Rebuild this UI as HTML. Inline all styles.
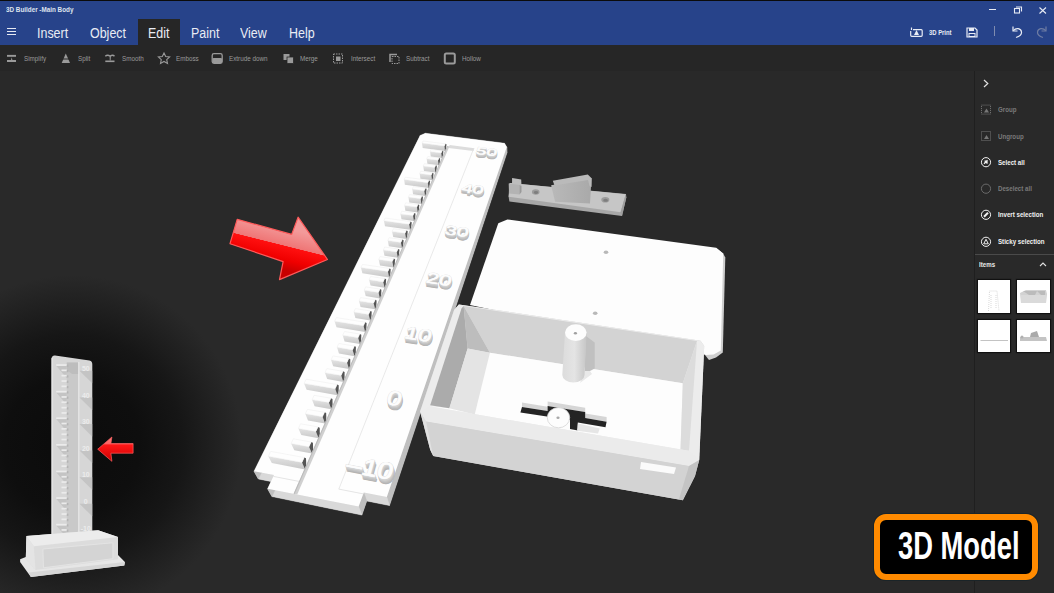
<!DOCTYPE html><html><head><meta charset="utf-8"><style>
html,body{margin:0;padding:0;}
body{width:1054px;height:593px;position:relative;overflow:hidden;background:#292929;}
</style></head><body>
<svg style="position:absolute;left:0;top:0" width="1054" height="593" viewBox="0 0 1054 593">
<defs>
<linearGradient id="tickfront" x1="0" y1="0" x2="0" y2="1"><stop offset="0" stop-color="#e4e4e4"/><stop offset="1" stop-color="#c8c8c8"/></linearGradient>
<linearGradient id="wedge" x1="0" y1="0" x2="1" y2="0"><stop offset="0" stop-color="#b9b9b9"/><stop offset="1" stop-color="#a9a9a9"/></linearGradient>
<linearGradient id="post" x1="0" y1="0" x2="1" y2="0"><stop offset="0" stop-color="#dcdcdc"/><stop offset="0.5" stop-color="#e4e4e4"/><stop offset="1" stop-color="#c6c6c6"/></linearGradient>
<linearGradient id="arrowg" gradientUnits="userSpaceOnUse" x1="262" y1="222" x2="252" y2="262">
<stop offset="0" stop-color="#f39a9a"/><stop offset="0.42" stop-color="#ef7676"/><stop offset="0.43" stop-color="#ff1010"/><stop offset="0.75" stop-color="#f00000"/><stop offset="1" stop-color="#c80000"/></linearGradient>
<linearGradient id="arrows" gradientUnits="userSpaceOnUse" x1="0" y1="437" x2="0" y2="461">
<stop offset="0" stop-color="#ff8080"/><stop offset="0.3" stop-color="#ff6060"/><stop offset="0.32" stop-color="#ff1818"/><stop offset="1" stop-color="#d00000"/></linearGradient>
<radialGradient id="vign" gradientUnits="userSpaceOnUse" cx="72" cy="445" r="170">
<stop offset="0" stop-color="#0b0b0b"/><stop offset="0.4" stop-color="#0e0e0e"/><stop offset="0.65" stop-color="#161616"/><stop offset="0.85" stop-color="#212121"/><stop offset="1" stop-color="#292929"/></radialGradient>
</defs>
<rect x="0" y="240" width="280" height="353" fill="url(#vign)"/>
<path d="M51.5,536.5 L51.5,359 Q51.6,355.3 55,355.5 L89.5,360.4 Q92.4,361 92.3,364.5 L92.3,536 Z" fill="#d6d6d6"/>
<rect x="51.5" y="358" width="1.6" height="178" fill="#e2e2e2"/>
<polygon points="66.8,362.4 78.2,362.4 78.2,536.0 66.8,536.0" fill="#c9c9c9" />
<polygon points="66.8,362.4 78.2,362.4 78.2,374.0 72.0,374.0 66.8,370.0" fill="#bdbdbd" />
<line x1="78.8" y1="362" x2="78.8" y2="536" stroke="#ededed" stroke-width="0.9"/>
<polygon points="56.2,365.8 66.8,365.8 66.8,378.2" fill="#c4c4c4" />
<rect x="56.2" y="364.2" width="10.6" height="1.7" fill="#ebebeb"/>
<rect x="66.8" y="364.7" width="1.6" height="2.2" fill="#b4b4b4"/>
<rect x="61.5" y="369.5" width="5.3" height="1.7" fill="#ebebeb"/>
<rect x="66.8" y="370.0" width="1.6" height="2.2" fill="#b4b4b4"/>
<rect x="61.5" y="374.8" width="5.3" height="1.7" fill="#ebebeb"/>
<rect x="66.8" y="375.3" width="1.6" height="2.2" fill="#b4b4b4"/>
<rect x="61.5" y="380.2" width="5.3" height="1.7" fill="#ebebeb"/>
<rect x="66.8" y="380.7" width="1.6" height="2.2" fill="#b4b4b4"/>
<rect x="61.5" y="385.5" width="5.3" height="1.7" fill="#ebebeb"/>
<rect x="66.8" y="386.0" width="1.6" height="2.2" fill="#b4b4b4"/>
<polygon points="56.2,392.4 66.8,392.4 66.8,404.8" fill="#c4c4c4" />
<rect x="56.2" y="390.8" width="10.6" height="1.7" fill="#ebebeb"/>
<rect x="66.8" y="391.3" width="1.6" height="2.2" fill="#b4b4b4"/>
<rect x="61.5" y="396.1" width="5.3" height="1.7" fill="#ebebeb"/>
<rect x="66.8" y="396.6" width="1.6" height="2.2" fill="#b4b4b4"/>
<rect x="61.5" y="401.4" width="5.3" height="1.7" fill="#ebebeb"/>
<rect x="66.8" y="401.9" width="1.6" height="2.2" fill="#b4b4b4"/>
<rect x="61.5" y="406.8" width="5.3" height="1.7" fill="#ebebeb"/>
<rect x="66.8" y="407.3" width="1.6" height="2.2" fill="#b4b4b4"/>
<rect x="61.5" y="412.1" width="5.3" height="1.7" fill="#ebebeb"/>
<rect x="66.8" y="412.6" width="1.6" height="2.2" fill="#b4b4b4"/>
<polygon points="56.2,419.0 66.8,419.0 66.8,431.4" fill="#c4c4c4" />
<rect x="56.2" y="417.4" width="10.6" height="1.7" fill="#ebebeb"/>
<rect x="66.8" y="417.9" width="1.6" height="2.2" fill="#b4b4b4"/>
<rect x="61.5" y="422.7" width="5.3" height="1.7" fill="#ebebeb"/>
<rect x="66.8" y="423.2" width="1.6" height="2.2" fill="#b4b4b4"/>
<rect x="61.5" y="428.0" width="5.3" height="1.7" fill="#ebebeb"/>
<rect x="66.8" y="428.5" width="1.6" height="2.2" fill="#b4b4b4"/>
<rect x="61.5" y="433.4" width="5.3" height="1.7" fill="#ebebeb"/>
<rect x="66.8" y="433.9" width="1.6" height="2.2" fill="#b4b4b4"/>
<rect x="61.5" y="438.7" width="5.3" height="1.7" fill="#ebebeb"/>
<rect x="66.8" y="439.2" width="1.6" height="2.2" fill="#b4b4b4"/>
<polygon points="56.2,445.6 66.8,445.6 66.8,458.0" fill="#c4c4c4" />
<rect x="56.2" y="444.0" width="10.6" height="1.7" fill="#ebebeb"/>
<rect x="66.8" y="444.5" width="1.6" height="2.2" fill="#b4b4b4"/>
<rect x="61.5" y="449.3" width="5.3" height="1.7" fill="#ebebeb"/>
<rect x="66.8" y="449.8" width="1.6" height="2.2" fill="#b4b4b4"/>
<rect x="61.5" y="454.6" width="5.3" height="1.7" fill="#ebebeb"/>
<rect x="66.8" y="455.1" width="1.6" height="2.2" fill="#b4b4b4"/>
<rect x="61.5" y="460.0" width="5.3" height="1.7" fill="#ebebeb"/>
<rect x="66.8" y="460.5" width="1.6" height="2.2" fill="#b4b4b4"/>
<rect x="61.5" y="465.3" width="5.3" height="1.7" fill="#ebebeb"/>
<rect x="66.8" y="465.8" width="1.6" height="2.2" fill="#b4b4b4"/>
<polygon points="56.2,472.2 66.8,472.2 66.8,484.6" fill="#c4c4c4" />
<rect x="56.2" y="470.6" width="10.6" height="1.7" fill="#ebebeb"/>
<rect x="66.8" y="471.1" width="1.6" height="2.2" fill="#b4b4b4"/>
<rect x="61.5" y="475.9" width="5.3" height="1.7" fill="#ebebeb"/>
<rect x="66.8" y="476.4" width="1.6" height="2.2" fill="#b4b4b4"/>
<rect x="61.5" y="481.2" width="5.3" height="1.7" fill="#ebebeb"/>
<rect x="66.8" y="481.7" width="1.6" height="2.2" fill="#b4b4b4"/>
<rect x="61.5" y="486.6" width="5.3" height="1.7" fill="#ebebeb"/>
<rect x="66.8" y="487.1" width="1.6" height="2.2" fill="#b4b4b4"/>
<rect x="61.5" y="491.9" width="5.3" height="1.7" fill="#ebebeb"/>
<rect x="66.8" y="492.4" width="1.6" height="2.2" fill="#b4b4b4"/>
<polygon points="56.2,498.8 66.8,498.8 66.8,511.2" fill="#c4c4c4" />
<rect x="56.2" y="497.2" width="10.6" height="1.7" fill="#ebebeb"/>
<rect x="66.8" y="497.7" width="1.6" height="2.2" fill="#b4b4b4"/>
<rect x="61.5" y="502.5" width="5.3" height="1.7" fill="#ebebeb"/>
<rect x="66.8" y="503.0" width="1.6" height="2.2" fill="#b4b4b4"/>
<rect x="61.5" y="507.8" width="5.3" height="1.7" fill="#ebebeb"/>
<rect x="66.8" y="508.3" width="1.6" height="2.2" fill="#b4b4b4"/>
<rect x="61.5" y="513.2" width="5.3" height="1.7" fill="#ebebeb"/>
<rect x="66.8" y="513.7" width="1.6" height="2.2" fill="#b4b4b4"/>
<rect x="61.5" y="518.5" width="5.3" height="1.7" fill="#ebebeb"/>
<rect x="66.8" y="519.0" width="1.6" height="2.2" fill="#b4b4b4"/>
<polygon points="56.2,525.4 66.8,525.4 66.8,537.8" fill="#c4c4c4" />
<rect x="56.2" y="523.8" width="10.6" height="1.7" fill="#ebebeb"/>
<rect x="66.8" y="524.3" width="1.6" height="2.2" fill="#b4b4b4"/>
<rect x="61.5" y="529.1" width="5.3" height="1.7" fill="#ebebeb"/>
<rect x="66.8" y="529.6" width="1.6" height="2.2" fill="#b4b4b4"/>
<rect x="61.5" y="534.4" width="5.3" height="1.7" fill="#ebebeb"/>
<rect x="66.8" y="534.9" width="1.6" height="2.2" fill="#b4b4b4"/>
<polygon points="79.5,370.8 92.2,370.8 92.2,383.3" fill="#c4c4c4" />
<text x="85.8" y="370.9" text-anchor="middle" font-family="Liberation Sans" font-weight="bold" font-size="7" fill="#ececec">50</text>
<polygon points="79.5,397.4 92.2,397.4 92.2,409.9" fill="#c4c4c4" />
<text x="85.8" y="397.5" text-anchor="middle" font-family="Liberation Sans" font-weight="bold" font-size="7" fill="#ececec">40</text>
<polygon points="79.5,424.0 92.2,424.0 92.2,436.5" fill="#c4c4c4" />
<text x="85.8" y="424.1" text-anchor="middle" font-family="Liberation Sans" font-weight="bold" font-size="7" fill="#ececec">30</text>
<polygon points="79.5,450.6 92.2,450.6 92.2,463.1" fill="#c4c4c4" />
<text x="85.8" y="450.7" text-anchor="middle" font-family="Liberation Sans" font-weight="bold" font-size="7" fill="#ececec">20</text>
<polygon points="79.5,477.2 92.2,477.2 92.2,489.7" fill="#c4c4c4" />
<text x="85.8" y="477.3" text-anchor="middle" font-family="Liberation Sans" font-weight="bold" font-size="7" fill="#ececec">10</text>
<polygon points="79.5,503.8 92.2,503.8 92.2,516.3" fill="#c4c4c4" />
<text x="85.8" y="503.9" text-anchor="middle" font-family="Liberation Sans" font-weight="bold" font-size="7" fill="#ececec">0</text>
<polygon points="79.5,530.4 92.2,530.4 92.2,542.9" fill="#c4c4c4" />
<text x="85.8" y="530.5" text-anchor="middle" font-family="Liberation Sans" font-weight="bold" font-size="7" fill="#ececec">-10</text>
<polygon points="20.1,559.3 25.8,557.0 118.0,555.0 124.9,562.1 124.3,565.5 30.9,577.0 20.1,562.0" fill="#e6e6e6" />
<polygon points="28.7,572.4 124.9,562.1 124.3,565.5 30.9,577.0" fill="#d6d6d6" />
<polygon points="26.4,536.0 98.1,530.2 118.0,537.1 118.0,559.3 35.5,570.1 25.8,558.7" fill="#dcdcdc" />
<polygon points="26.4,536.0 98.1,530.2 118.0,537.1 33.8,546.2" fill="#ececec" />
<polygon points="26.4,536.0 33.8,546.2 35.5,570.1 25.8,558.7" fill="#e4e4e4" />
<polygon points="42.9,549.0 112.9,542.8 112.9,558.7 43.5,567.8" fill="#d4d4d4" stroke="#e6e6e6" stroke-width="0.8"/>
<polygon points="716.1,247.7 723.2,253.6 725.3,257.5 722.8,352.5 716.0,357.5 709.0,360.0 705.0,355.0" fill="#cfcfcf" />
<polygon points="498.3,223.2 507.4,219.4 716.1,247.7 723.2,253.6 720.8,350.4 713.7,354.5 706.0,355.0 470.0,305.0" fill="#fdfdfd" />
<ellipse cx="606" cy="252.3" rx="2.3" ry="1.7" fill="#b8b8b8"/>
<ellipse cx="595.2" cy="313.3" rx="2.3" ry="1.7" fill="#b8b8b8"/>
<polygon points="509.4,183.0 626.0,194.0 626.3,197.5 622.0,216.0 509.4,201.6 508.6,196.5" fill="#a7a7a7" />
<polygon points="510.0,183.0 625.7,194.2 620.6,212.3 508.7,196.7" fill="#c6c6c6" />
<polygon points="625.7,194.2 626.3,197.5 622.0,216.0 620.6,212.3" fill="#9e9e9e" />
<polygon points="512.1,178.1 521.2,179.5 521.5,186.0 512.0,185.0" fill="#bdbdbd" />
<polygon points="508.7,183.5 519.5,185.0 519.5,194.5 509.0,193.5" fill="#b3b3b3" />
<polygon points="519.5,185.0 521.5,186.0 521.5,192.0 519.5,194.5" fill="#9a9a9a" />
<polygon points="551.1,185.2 591.6,178.0 590.0,203.5 555.1,201.8" fill="url(#wedge)" />
<polygon points="552.8,180.8 587.8,174.6 591.6,178.3 591.6,187.0 589.5,186.0 588.0,180.0 554.5,185.5" fill="#bababa" />
<ellipse cx="535.7" cy="192" rx="3.8" ry="2.7" fill="#9c9c9c"/>
<ellipse cx="536.0" cy="192.5" rx="2.28" ry="1.4850000000000003" fill="#7e7e7e"/>
<ellipse cx="605.3" cy="199.8" rx="4" ry="2.8" fill="#9c9c9c"/>
<ellipse cx="605.5999999999999" cy="200.3" rx="2.4" ry="1.54" fill="#7e7e7e"/>
<polygon points="420.9,141.1 426.0,138.8 504.7,149.0 507.0,152.8 389.5,505.6 366.8,501.0 361.9,515.1 272.0,496.6 278.2,483.0 258.4,479.0" fill="#cfcfcf" />
<polygon points="420.1,135.4 425.3,133.2 426.0,138.8 420.9,141.1" fill="#bfbfbf" stroke="#bfbfbf" stroke-width="0.4"/>
<polygon points="425.3,133.2 504.5,143.2 504.7,149.0 426.0,138.8" fill="#d9d9d9" stroke="#d9d9d9" stroke-width="0.4"/>
<polygon points="504.5,143.2 506.8,147.0 507.0,152.8 504.7,149.0" fill="#bfbfbf" stroke="#bfbfbf" stroke-width="0.4"/>
<polygon points="506.8,147.0 386.8,496.9 389.5,505.6 507.0,152.8" fill="#bfbfbf" stroke="#bfbfbf" stroke-width="0.4"/>
<polygon points="386.8,496.9 363.8,492.5 366.8,501.0 389.5,505.6" fill="#d9d9d9" stroke="#d9d9d9" stroke-width="0.4"/>
<polygon points="363.8,492.5 358.6,506.5 361.9,515.1 366.8,501.0" fill="#bfbfbf" stroke="#bfbfbf" stroke-width="0.4"/>
<polygon points="358.6,506.5 267.6,488.7 272.0,496.6 361.9,515.1" fill="#d9d9d9" stroke="#d9d9d9" stroke-width="0.4"/>
<polygon points="267.6,488.7 274.0,475.1 278.2,483.0 272.0,496.6" fill="#bfbfbf" stroke="#bfbfbf" stroke-width="0.4"/>
<polygon points="274.0,475.1 254.0,471.2 258.4,479.0 278.2,483.0" fill="#d9d9d9" stroke="#d9d9d9" stroke-width="0.4"/>
<polygon points="254.0,471.2 420.1,135.4 420.9,141.1 258.4,479.0" fill="#bfbfbf" stroke="#bfbfbf" stroke-width="0.4"/>
<polygon points="420.1,135.4 425.3,133.2 504.5,143.2 506.8,147.0 386.8,496.9 363.8,492.5 358.6,506.5 267.6,488.7 274.0,475.1 254.0,471.2" fill="#fefefe" />
<polygon points="449.7,145.0 474.5,148.2 473.4,151.1 448.4,147.9" fill="#dcdcdc" />
<polyline points="473.4,149.3 338.8,489.1" fill="none" stroke="#e3e3e3" stroke-width="0.8"/>
<polyline points="273.4,476.4 300.5,481.7" fill="none" stroke="#dedede" stroke-width="0.8"/>
<polyline points="338.8,489.1 363.3,493.9" fill="none" stroke="#dedede" stroke-width="0.8"/>
<polygon points="422.0,143.1 444.4,145.9 444.9,150.9 422.7,148.0" fill="url(#tickfront)" />
<polygon points="445.3,143.8 446.5,144.3 445.8,151.0 444.9,150.9 444.4,145.9" fill="#555555" />
<polygon points="423.0,141.0 445.3,143.8 444.4,145.9 422.0,143.1" fill="#fefefe" stroke="#e8e8e8" stroke-width="0.4"/>
<polygon points="430.1,151.6 441.2,153.0 441.8,158.0 430.8,156.5" fill="url(#tickfront)" />
<polygon points="442.2,150.8 443.4,151.3 442.7,158.1 441.8,158.0 441.2,153.0" fill="#555555" />
<polygon points="431.1,149.4 442.2,150.8 441.2,153.0 430.1,151.6" fill="#fefefe" stroke="#e8e8e8" stroke-width="0.4"/>
<polygon points="426.7,158.7 438.0,160.2 438.6,165.2 427.4,163.7" fill="url(#tickfront)" />
<polygon points="439.0,157.9 440.2,158.5 439.5,165.4 438.6,165.2 438.0,160.2" fill="#555555" />
<polygon points="427.8,156.5 439.0,157.9 438.0,160.2 426.7,158.7" fill="#fefefe" stroke="#e8e8e8" stroke-width="0.4"/>
<polygon points="423.2,166.0 434.7,167.5 435.3,172.6 424.0,171.1" fill="url(#tickfront)" />
<polygon points="435.7,165.2 436.9,165.8 436.2,172.8 435.3,172.6 434.7,167.5" fill="#555555" />
<polygon points="424.3,163.7 435.7,165.2 434.7,167.5 423.2,166.0" fill="#fefefe" stroke="#e8e8e8" stroke-width="0.4"/>
<polygon points="419.7,173.5 431.3,175.1 432.0,180.2 420.4,178.7" fill="url(#tickfront)" />
<polygon points="432.3,172.7 433.5,173.3 432.9,180.4 432.0,180.2 431.3,175.1" fill="#555555" />
<polygon points="420.8,171.2 432.3,172.7 431.3,175.1 419.7,173.5" fill="#fefefe" stroke="#e8e8e8" stroke-width="0.4"/>
<polygon points="404.1,179.6 427.8,182.8 428.5,188.0 404.9,184.8" fill="url(#tickfront)" />
<polygon points="428.9,180.3 430.1,180.9 429.4,188.1 428.5,188.0 427.8,182.8" fill="#555555" />
<polygon points="405.3,177.2 428.9,180.3 427.8,182.8 404.1,179.6" fill="#fefefe" stroke="#e8e8e8" stroke-width="0.4"/>
<polygon points="412.3,189.1 424.2,190.7 425.0,196.0 413.1,194.3" fill="url(#tickfront)" />
<polygon points="425.4,188.2 426.6,188.8 425.9,196.1 425.0,196.0 424.2,190.7" fill="#555555" />
<polygon points="413.4,186.6 425.4,188.2 424.2,190.7 412.3,189.1" fill="#fefefe" stroke="#e8e8e8" stroke-width="0.4"/>
<polygon points="408.4,197.1 420.6,198.8 421.4,204.1 409.3,202.4" fill="url(#tickfront)" />
<polygon points="421.7,196.2 423.0,196.8 422.3,204.3 421.4,204.1 420.6,198.8" fill="#555555" />
<polygon points="409.6,194.6 421.7,196.2 420.6,198.8 408.4,197.1" fill="#fefefe" stroke="#e8e8e8" stroke-width="0.4"/>
<polygon points="404.5,205.4 416.9,207.1 417.7,212.5 405.4,210.8" fill="url(#tickfront)" />
<polygon points="418.0,204.5 419.3,205.1 418.7,212.6 417.7,212.5 416.9,207.1" fill="#555555" />
<polygon points="405.7,202.8 418.0,204.5 416.9,207.1 404.5,205.4" fill="#fefefe" stroke="#e8e8e8" stroke-width="0.4"/>
<polygon points="400.5,213.9 413.0,215.6 413.9,221.1 401.5,219.3" fill="url(#tickfront)" />
<polygon points="414.2,212.9 415.5,213.5 414.9,221.2 413.9,221.1 413.0,215.6" fill="#555555" />
<polygon points="401.7,211.2 414.2,212.9 413.0,215.6 400.5,213.9" fill="#fefefe" stroke="#e8e8e8" stroke-width="0.4"/>
<polygon points="383.9,220.8 409.1,224.3 410.1,229.8 385.0,226.2" fill="url(#tickfront)" />
<polygon points="410.4,221.6 411.7,222.2 411.0,230.0 410.1,229.8 409.1,224.3" fill="#555555" />
<polygon points="385.2,218.0 410.4,221.6 409.1,224.3 383.9,220.8" fill="#fefefe" stroke="#e8e8e8" stroke-width="0.4"/>
<polygon points="392.1,231.4 405.1,233.3 406.1,238.9 393.2,237.0" fill="url(#tickfront)" />
<polygon points="406.3,230.5 407.7,231.1 407.1,239.0 406.1,238.9 405.1,233.3" fill="#555555" />
<polygon points="393.4,228.7 406.3,230.5 405.1,233.3 392.1,231.4" fill="#fefefe" stroke="#e8e8e8" stroke-width="0.4"/>
<polygon points="387.8,240.6 400.9,242.5 402.0,248.2 388.9,246.2" fill="url(#tickfront)" />
<polygon points="402.2,239.6 403.6,240.2 403.0,248.3 402.0,248.2 400.9,242.5" fill="#555555" />
<polygon points="389.1,237.7 402.2,239.6 400.9,242.5 387.8,240.6" fill="#fefefe" stroke="#e8e8e8" stroke-width="0.4"/>
<polygon points="383.3,250.0 396.7,251.9 397.8,257.7 384.5,255.7" fill="url(#tickfront)" />
<polygon points="398.0,249.0 399.4,249.6 398.8,257.8 397.8,257.7 396.7,251.9" fill="#555555" />
<polygon points="384.7,247.0 398.0,249.0 396.7,251.9 383.3,250.0" fill="#fefefe" stroke="#e8e8e8" stroke-width="0.4"/>
<polygon points="378.7,259.6 392.3,261.6 393.5,267.4 380.0,265.4" fill="url(#tickfront)" />
<polygon points="393.7,258.6 395.1,259.2 394.5,267.6 393.5,267.4 392.3,261.6" fill="#555555" />
<polygon points="380.1,256.6 393.7,258.6 392.3,261.6 378.7,259.6" fill="#fefefe" stroke="#e8e8e8" stroke-width="0.4"/>
<polygon points="360.9,267.5 387.9,271.6 389.1,277.4 362.4,273.3" fill="url(#tickfront)" />
<polygon points="389.3,268.4 390.7,269.1 390.1,277.6 389.1,277.4 387.9,271.6" fill="#555555" />
<polygon points="362.5,264.4 389.3,268.4 387.9,271.6 360.9,267.5" fill="#fefefe" stroke="#e8e8e8" stroke-width="0.4"/>
<polygon points="369.1,279.7 383.2,281.9 384.6,287.8 370.6,285.6" fill="url(#tickfront)" />
<polygon points="384.7,278.6 386.1,279.3 385.6,287.9 384.6,287.8 383.2,281.9" fill="#555555" />
<polygon points="370.6,276.5 384.7,278.6 383.2,281.9 369.1,279.7" fill="#fefefe" stroke="#e8e8e8" stroke-width="0.4"/>
<polygon points="364.2,290.2 378.5,292.4 379.9,298.4 365.7,296.1" fill="url(#tickfront)" />
<polygon points="380.0,289.1 381.4,289.7 381.0,298.6 379.9,298.4 378.5,292.4" fill="#555555" />
<polygon points="365.7,286.9 380.0,289.1 378.5,292.4 364.2,290.2" fill="#fefefe" stroke="#e8e8e8" stroke-width="0.4"/>
<polygon points="359.0,301.0 373.6,303.2 375.1,309.3 360.6,307.0" fill="url(#tickfront)" />
<polygon points="375.2,299.8 376.6,300.5 376.2,309.5 375.1,309.3 373.6,303.2" fill="#555555" />
<polygon points="360.6,297.6 375.2,299.8 373.6,303.2 359.0,301.0" fill="#fefefe" stroke="#e8e8e8" stroke-width="0.4"/>
<polygon points="353.8,312.0 368.6,314.4 370.2,320.5 355.4,318.1" fill="url(#tickfront)" />
<polygon points="370.2,310.9 371.7,311.5 371.3,320.7 370.2,320.5 368.6,314.4" fill="#555555" />
<polygon points="355.4,308.6 370.2,310.9 368.6,314.4 353.8,312.0" fill="#fefefe" stroke="#e8e8e8" stroke-width="0.4"/>
<polygon points="334.6,321.2 363.5,325.8 365.1,332.0 336.5,327.3" fill="url(#tickfront)" />
<polygon points="365.1,322.2 366.6,322.9 366.2,332.2 365.1,332.0 363.5,325.8" fill="#555555" />
<polygon points="336.4,317.6 365.1,322.2 363.5,325.8 334.6,321.2" fill="#fefefe" stroke="#e8e8e8" stroke-width="0.4"/>
<polygon points="342.7,335.2 358.1,337.7 359.9,344.0 344.6,341.4" fill="url(#tickfront)" />
<polygon points="359.8,334.0 361.3,334.7 361.0,344.2 359.9,344.0 358.1,337.7" fill="#555555" />
<polygon points="344.5,331.5 359.8,334.0 358.1,337.7 342.7,335.2" fill="#fefefe" stroke="#e8e8e8" stroke-width="0.4"/>
<polygon points="337.0,347.3 352.6,349.9 354.5,356.2 339.0,353.6" fill="url(#tickfront)" />
<polygon points="354.4,346.0 355.9,346.7 355.7,356.4 354.5,356.2 352.6,349.9" fill="#555555" />
<polygon points="338.8,343.5 354.4,346.0 352.6,349.9 337.0,347.3" fill="#fefefe" stroke="#e8e8e8" stroke-width="0.4"/>
<polygon points="331.0,359.8 347.0,362.4 349.0,368.9 333.2,366.2" fill="url(#tickfront)" />
<polygon points="348.8,358.5 350.3,359.2 350.2,369.1 349.0,368.9 347.0,362.4" fill="#555555" />
<polygon points="332.9,355.9 348.8,358.5 347.0,362.4 331.0,359.8" fill="#fefefe" stroke="#e8e8e8" stroke-width="0.4"/>
<polygon points="324.9,372.7 341.2,375.4 343.3,381.9 327.2,379.1" fill="url(#tickfront)" />
<polygon points="343.0,371.3 344.6,372.0 344.5,382.1 343.3,381.9 341.2,375.4" fill="#555555" />
<polygon points="326.8,368.6 343.0,371.3 341.2,375.4 324.9,372.7" fill="#fefefe" stroke="#e8e8e8" stroke-width="0.4"/>
<polygon points="304.1,383.4 335.2,388.7 337.4,395.3 306.6,389.8" fill="url(#tickfront)" />
<polygon points="337.1,384.5 338.7,385.2 338.6,395.5 337.4,395.3 335.2,388.7" fill="#555555" />
<polygon points="306.1,379.2 337.1,384.5 335.2,388.7 304.1,383.4" fill="#fefefe" stroke="#e8e8e8" stroke-width="0.4"/>
<polygon points="312.1,399.7 328.9,402.6 331.3,409.2 314.6,406.2" fill="url(#tickfront)" />
<polygon points="330.9,398.2 332.5,399.0 332.6,409.4 331.3,409.2 328.9,402.6" fill="#555555" />
<polygon points="314.1,395.3 330.9,398.2 328.9,402.6 312.1,399.7" fill="#fefefe" stroke="#e8e8e8" stroke-width="0.4"/>
<polygon points="305.3,413.8 322.5,416.8 325.1,423.5 308.0,420.4" fill="url(#tickfront)" />
<polygon points="324.6,412.3 326.2,413.1 326.3,423.7 325.1,423.5 322.5,416.8" fill="#555555" />
<polygon points="307.4,409.4 324.6,412.3 322.5,416.8 305.3,413.8" fill="#fefefe" stroke="#e8e8e8" stroke-width="0.4"/>
<polygon points="298.4,428.5 315.9,431.6 318.6,438.3 301.3,435.1" fill="url(#tickfront)" />
<polygon points="318.0,426.9 319.7,427.7 319.9,438.5 318.6,438.3 315.9,431.6" fill="#555555" />
<polygon points="300.5,423.8 318.0,426.9 315.9,431.6 298.4,428.5" fill="#fefefe" stroke="#e8e8e8" stroke-width="0.4"/>
<polygon points="291.1,443.6 309.0,446.8 312.0,453.6 294.3,450.3" fill="url(#tickfront)" />
<polygon points="311.2,442.0 312.9,442.8 313.3,453.8 312.0,453.6 309.0,446.8" fill="#555555" />
<polygon points="293.4,438.8 311.2,442.0 309.0,446.8 291.1,443.6" fill="#fefefe" stroke="#e8e8e8" stroke-width="0.4"/>
<polygon points="268.3,456.3 302.0,462.5 305.1,469.4 271.8,463.0" fill="url(#tickfront)" />
<polygon points="304.2,457.5 306.0,458.3 306.4,469.6 305.1,469.4 302.0,462.5" fill="#555555" />
<polygon points="270.7,451.4 304.2,457.5 302.0,462.5 268.3,456.3" fill="#fefefe" stroke="#e8e8e8" stroke-width="0.4"/>
<polygon points="447.2,145.9 449.5,146.2 297.2,494.5 293.6,493.8" fill="#d0d0d0" />
<polygon points="447.2,145.9 447.9,146.0 294.6,494.0 293.6,493.8" fill="#bababa" />
<text transform="matrix(0.8878,0.1140,-0.1327,0.4702,486.86,154.78)" x="0" y="7.5" text-anchor="middle" font-family="Liberation Sans" font-size="21" fill="#b4b4b4" stroke="#b4b4b4" stroke-width="1.1">50</text>
<text transform="matrix(0.8878,0.1140,-0.1327,0.4702,486.82,154.02)" x="0" y="7.5" text-anchor="middle" font-family="Liberation Sans" font-size="21" fill="#bdbdbd" stroke="#bdbdbd" stroke-width="1.1">50</text>
<text transform="matrix(0.8878,0.1140,-0.1327,0.4702,486.77,153.20)" x="0" y="7.5" text-anchor="middle" font-family="Liberation Sans" font-size="21" fill="#c6c6c6" stroke="#c6c6c6" stroke-width="1.1">50</text>
<text transform="matrix(0.8878,0.1140,-0.1327,0.4702,486.72,152.39)" x="0" y="7.5" text-anchor="middle" font-family="Liberation Sans" font-size="21" fill="#d2d2d2" stroke="#d2d2d2" stroke-width="1.1">50</text>
<text transform="matrix(0.8878,0.1140,-0.1327,0.4702,486.67,151.57)" x="0" y="7.5" text-anchor="middle" font-family="Liberation Sans" font-size="21" fill="#fdfdfd" stroke="#dcdcdc" stroke-width="1.1" paint-order="stroke">50</text>
<text transform="matrix(0.8878,0.1140,-0.1327,0.4702,486.67,151.57)" x="0" y="7.5" text-anchor="middle" font-family="Liberation Sans" font-size="21" fill="#fdfdfd" stroke="#fdfdfd" stroke-width="0.4">50</text>
<text transform="matrix(0.9394,0.1272,-0.1493,0.5291,473.01,192.30)" x="0" y="7.5" text-anchor="middle" font-family="Liberation Sans" font-size="21" fill="#b4b4b4" stroke="#b4b4b4" stroke-width="1.1">40</text>
<text transform="matrix(0.9394,0.1272,-0.1493,0.5291,472.95,191.49)" x="0" y="7.5" text-anchor="middle" font-family="Liberation Sans" font-size="21" fill="#bdbdbd" stroke="#bdbdbd" stroke-width="1.1">40</text>
<text transform="matrix(0.9394,0.1272,-0.1493,0.5291,472.87,190.63)" x="0" y="7.5" text-anchor="middle" font-family="Liberation Sans" font-size="21" fill="#c6c6c6" stroke="#c6c6c6" stroke-width="1.1">40</text>
<text transform="matrix(0.9394,0.1272,-0.1493,0.5291,472.80,189.76)" x="0" y="7.5" text-anchor="middle" font-family="Liberation Sans" font-size="21" fill="#d2d2d2" stroke="#d2d2d2" stroke-width="1.1">40</text>
<text transform="matrix(0.9394,0.1272,-0.1493,0.5291,472.73,188.90)" x="0" y="7.5" text-anchor="middle" font-family="Liberation Sans" font-size="21" fill="#fdfdfd" stroke="#dcdcdc" stroke-width="1.1" paint-order="stroke">40</text>
<text transform="matrix(0.9394,0.1272,-0.1493,0.5291,472.73,188.90)" x="0" y="7.5" text-anchor="middle" font-family="Liberation Sans" font-size="21" fill="#fdfdfd" stroke="#fdfdfd" stroke-width="0.4">40</text>
<text transform="matrix(0.9973,0.1430,-0.1693,0.5997,457.39,234.66)" x="0" y="7.5" text-anchor="middle" font-family="Liberation Sans" font-size="21" fill="#b4b4b4" stroke="#b4b4b4" stroke-width="1.1">30</text>
<text transform="matrix(0.9973,0.1430,-0.1693,0.5997,457.29,233.81)" x="0" y="7.5" text-anchor="middle" font-family="Liberation Sans" font-size="21" fill="#bdbdbd" stroke="#bdbdbd" stroke-width="1.1">30</text>
<text transform="matrix(0.9973,0.1430,-0.1693,0.5997,457.20,232.89)" x="0" y="7.5" text-anchor="middle" font-family="Liberation Sans" font-size="21" fill="#c6c6c6" stroke="#c6c6c6" stroke-width="1.1">30</text>
<text transform="matrix(0.9973,0.1430,-0.1693,0.5997,457.10,231.98)" x="0" y="7.5" text-anchor="middle" font-family="Liberation Sans" font-size="21" fill="#d2d2d2" stroke="#d2d2d2" stroke-width="1.1">30</text>
<text transform="matrix(0.9973,0.1430,-0.1693,0.5997,457.00,231.06)" x="0" y="7.5" text-anchor="middle" font-family="Liberation Sans" font-size="21" fill="#fdfdfd" stroke="#dcdcdc" stroke-width="1.1" paint-order="stroke">30</text>
<text transform="matrix(0.9973,0.1430,-0.1693,0.5997,457.00,231.06)" x="0" y="7.5" text-anchor="middle" font-family="Liberation Sans" font-size="21" fill="#fdfdfd" stroke="#fdfdfd" stroke-width="0.4">30</text>
<text transform="matrix(1.0628,0.1621,-0.1935,0.6856,439.63,282.89)" x="0" y="7.5" text-anchor="middle" font-family="Liberation Sans" font-size="21" fill="#b4b4b4" stroke="#b4b4b4" stroke-width="1.1">20</text>
<text transform="matrix(1.0628,0.1621,-0.1935,0.6856,439.50,281.98)" x="0" y="7.5" text-anchor="middle" font-family="Liberation Sans" font-size="21" fill="#bdbdbd" stroke="#bdbdbd" stroke-width="1.1">20</text>
<text transform="matrix(1.0628,0.1621,-0.1935,0.6856,439.36,281.00)" x="0" y="7.5" text-anchor="middle" font-family="Liberation Sans" font-size="21" fill="#c6c6c6" stroke="#c6c6c6" stroke-width="1.1">20</text>
<text transform="matrix(1.0628,0.1621,-0.1935,0.6856,439.22,280.02)" x="0" y="7.5" text-anchor="middle" font-family="Liberation Sans" font-size="21" fill="#d2d2d2" stroke="#d2d2d2" stroke-width="1.1">20</text>
<text transform="matrix(1.0628,0.1621,-0.1935,0.6856,439.09,279.04)" x="0" y="7.5" text-anchor="middle" font-family="Liberation Sans" font-size="21" fill="#fdfdfd" stroke="#dcdcdc" stroke-width="1.1" paint-order="stroke">20</text>
<text transform="matrix(1.0628,0.1621,-0.1935,0.6856,439.09,279.04)" x="0" y="7.5" text-anchor="middle" font-family="Liberation Sans" font-size="21" fill="#fdfdfd" stroke="#fdfdfd" stroke-width="0.4">20</text>
<text transform="matrix(1.1375,0.1856,-0.2233,0.7912,419.27,338.26)" x="0" y="7.5" text-anchor="middle" font-family="Liberation Sans" font-size="21" fill="#b4b4b4" stroke="#b4b4b4" stroke-width="1.1">10</text>
<text transform="matrix(1.1375,0.1856,-0.2233,0.7912,419.09,337.29)" x="0" y="7.5" text-anchor="middle" font-family="Liberation Sans" font-size="21" fill="#bdbdbd" stroke="#bdbdbd" stroke-width="1.1">10</text>
<text transform="matrix(1.1375,0.1856,-0.2233,0.7912,418.90,336.25)" x="0" y="7.5" text-anchor="middle" font-family="Liberation Sans" font-size="21" fill="#c6c6c6" stroke="#c6c6c6" stroke-width="1.1">10</text>
<text transform="matrix(1.1375,0.1856,-0.2233,0.7912,418.71,335.20)" x="0" y="7.5" text-anchor="middle" font-family="Liberation Sans" font-size="21" fill="#d2d2d2" stroke="#d2d2d2" stroke-width="1.1">10</text>
<text transform="matrix(1.1375,0.1856,-0.2233,0.7912,418.52,334.16)" x="0" y="7.5" text-anchor="middle" font-family="Liberation Sans" font-size="21" fill="#fdfdfd" stroke="#dcdcdc" stroke-width="1.1" paint-order="stroke">10</text>
<text transform="matrix(1.1375,0.1856,-0.2233,0.7912,418.52,334.16)" x="0" y="7.5" text-anchor="middle" font-family="Liberation Sans" font-size="21" fill="#fdfdfd" stroke="#fdfdfd" stroke-width="0.4">10</text>
<text transform="matrix(1.2235,0.2148,-0.2606,0.9234,395.72,402.50)" x="0" y="7.5" text-anchor="middle" font-family="Liberation Sans" font-size="21" fill="#b4b4b4" stroke="#b4b4b4" stroke-width="1.1">0</text>
<text transform="matrix(1.2235,0.2148,-0.2606,0.9234,395.47,401.46)" x="0" y="7.5" text-anchor="middle" font-family="Liberation Sans" font-size="21" fill="#bdbdbd" stroke="#bdbdbd" stroke-width="1.1">0</text>
<text transform="matrix(1.2235,0.2148,-0.2606,0.9234,395.19,400.35)" x="0" y="7.5" text-anchor="middle" font-family="Liberation Sans" font-size="21" fill="#c6c6c6" stroke="#c6c6c6" stroke-width="1.1">0</text>
<text transform="matrix(1.2235,0.2148,-0.2606,0.9234,394.92,399.24)" x="0" y="7.5" text-anchor="middle" font-family="Liberation Sans" font-size="21" fill="#d2d2d2" stroke="#d2d2d2" stroke-width="1.1">0</text>
<text transform="matrix(1.2235,0.2148,-0.2606,0.9234,394.64,398.12)" x="0" y="7.5" text-anchor="middle" font-family="Liberation Sans" font-size="21" fill="#fdfdfd" stroke="#dcdcdc" stroke-width="1.1" paint-order="stroke">0</text>
<text transform="matrix(1.2235,0.2148,-0.2606,0.9234,394.64,398.12)" x="0" y="7.5" text-anchor="middle" font-family="Liberation Sans" font-size="21" fill="#fdfdfd" stroke="#fdfdfd" stroke-width="0.4">0</text>
<text transform="matrix(1.3156,0.2487,-0.3041,1.0778,370.35,471.92)" x="1" y="7.5" text-anchor="middle" font-family="Liberation Sans" font-size="21" fill="#b4b4b4" stroke="#b4b4b4" stroke-width="1.1">&#8211;10</text>
<text transform="matrix(1.3156,0.2487,-0.3041,1.0778,369.99,470.82)" x="1" y="7.5" text-anchor="middle" font-family="Liberation Sans" font-size="21" fill="#bdbdbd" stroke="#bdbdbd" stroke-width="1.1">&#8211;10</text>
<text transform="matrix(1.3156,0.2487,-0.3041,1.0778,369.60,469.65)" x="1" y="7.5" text-anchor="middle" font-family="Liberation Sans" font-size="21" fill="#c6c6c6" stroke="#c6c6c6" stroke-width="1.1">&#8211;10</text>
<text transform="matrix(1.3156,0.2487,-0.3041,1.0778,369.21,468.47)" x="1" y="7.5" text-anchor="middle" font-family="Liberation Sans" font-size="21" fill="#d2d2d2" stroke="#d2d2d2" stroke-width="1.1">&#8211;10</text>
<text transform="matrix(1.3156,0.2487,-0.3041,1.0778,368.82,467.30)" x="1" y="7.5" text-anchor="middle" font-family="Liberation Sans" font-size="21" fill="#fdfdfd" stroke="#dcdcdc" stroke-width="1.1" paint-order="stroke">&#8211;10</text>
<text transform="matrix(1.3156,0.2487,-0.3041,1.0778,368.82,467.30)" x="1" y="7.5" text-anchor="middle" font-family="Liberation Sans" font-size="21" fill="#fdfdfd" stroke="#fdfdfd" stroke-width="0.4">&#8211;10</text>
<polygon points="454.2,309.8 458.9,304.4 700.5,340.7 704.2,346.0 699.2,460.0 695.0,476.0 682.8,500.3 433.2,456.0 430.2,449.8 420.1,411.4" fill="#d2d2d2" />
<polygon points="454.2,309.8 458.9,304.4 700.5,340.7 704.2,346.0 699.2,460.0 689.0,466.0 426.1,421.5 420.1,411.4" fill="#ececec" />
<polygon points="463.6,306.0 697.0,341.0 682.8,383.2 489.9,352.7" fill="#d3d3d3" />
<polygon points="489.9,352.7 682.8,383.2 680.5,449.5 429.2,406.3 449.4,408.3" fill="#fdfdfd" />
<polygon points="463.6,306.0 489.9,352.7 467.6,348.6" fill="#bdbdbd" />
<polygon points="461.5,308.5 463.6,306.0 467.6,348.6 449.4,408.3 430.2,405.3" fill="#ababab" />
<polygon points="467.6,348.6 489.9,352.7 474.7,414.6 449.4,408.3" fill="#e4e4e4" />
<polygon points="697.0,341.0 682.8,383.2 680.5,449.5 689.0,450.8" fill="#dcdcdc" />
<polygon points="420.1,411.4 429.2,406.3 689.0,450.8 699.2,460.0 689.0,466.0 426.1,421.5" fill="#ebebeb" />
<polygon points="426.1,421.5 689.0,466.0 678.9,499.5 433.2,456.0" fill="#d3d3d3" />
<polygon points="420.1,411.4 426.1,421.5 433.2,456.0 430.2,449.8" fill="#e0e0e0" />
<polygon points="689.0,466.0 699.2,460.0 695.0,476.0 682.8,500.3 678.9,499.5" fill="#c4c4c4" />
<polygon points="641.0,462.0 676.0,467.5 674.0,474.0 640.0,469.0" fill="#fbfbfb" />
<polygon points="586.0,336.0 594.7,342.4 594.7,368.5 590.0,371.0 584.5,373.0" fill="#c0c0c0" />
<polygon points="584.5,371.0 590.0,371.0 592.0,374.0 580.0,383.0" fill="#e9e9e9" />
<path d="M565,332.6 L562.3,375 A11.1,7.5 0 0 0 584.5,375 L586.6,332.6 Z" fill="url(#post)"/>
<ellipse cx="575.8" cy="332.6" rx="10.8" ry="8.4" fill="#fdfdfd"/>
<ellipse cx="575.4" cy="333.2" rx="1.6" ry="1.2" fill="#a0a0a0"/>
<polygon points="522.0,402.5 547.6,406.7 547.6,411.0 522.0,407.0" fill="#d6d6d6" />
<polygon points="547.6,401.5 585.2,407.7 585.2,412.0 547.6,406.0" fill="#d6d6d6" />
<polygon points="585.2,413.5 606.6,417.1 606.6,421.7 585.2,418.0" fill="#d6d6d6" />
<polygon points="522.0,407.0 547.6,411.0 547.6,406.0 585.2,412.0 585.2,418.0 606.6,421.7 605.5,427.2 577.8,422.5 577.8,430.4 570.0,429.0 570.0,420.0 520.4,412.6" fill="#242424" />
<polygon points="577.8,423.5 599.8,428.6 598.0,433.5 577.0,430.8" fill="#e6e6e6" />
<ellipse cx="558.5" cy="417.7" rx="11.2" ry="10.1" fill="#fdfdfd" stroke="#d4d4d4" stroke-width="0.8"/>
<ellipse cx="558" cy="417.7" rx="1.6" ry="1.3" fill="#a8a8a8"/>
<polygon points="237.2,219.3 291.7,234.4 298.1,217.2 327.5,259.5 279.5,279.6 283.1,261.6 230.0,243.7" fill="url(#arrowg)" stroke="#ff5a5a" stroke-width="1.2" stroke-linejoin="round"/>
<polygon points="97.7,449.2 111.9,437.0 110.9,443.5 133.1,443.5 133.1,453.2 110.9,453.2 111.9,461.3" fill="url(#arrows)" stroke="#ff6060" stroke-width="0.7" stroke-linejoin="round"/>
</svg>
<div style="position:absolute;left:0;top:0;width:1054px;height:1px;background:#0b0b0b"></div>
<div style="position:absolute;left:0;top:1px;width:1054px;height:44px;background:#27438a"></div>
<div style="position:absolute;left:6px;top:5px;font-family:'Liberation Sans',sans-serif;font-size:8px;line-height:9px;font-weight:bold;color:#dfe3ee;white-space:nowrap;transform:scaleX(0.79);transform-origin:0 0">3D Builder -Main Body</div>
<div style="position:absolute;left:7px;top:27.5px;width:9px;height:1.3px;background:#e6e9f2"></div>
<div style="position:absolute;left:7px;top:30.8px;width:9px;height:1.3px;background:#e6e9f2"></div>
<div style="position:absolute;left:7px;top:34.1px;width:9px;height:1.3px;background:#e6e9f2"></div>
<div style="position:absolute;left:138px;top:19px;width:42px;height:26px;background:#262626"></div>
<div style="position:absolute;left:37px;top:24.8px;font-family:'Liberation Sans',sans-serif;font-size:14px;color:#e9ecf4;white-space:nowrap;transform:scaleX(0.89);transform-origin:0 0;line-height:16px">Insert</div>
<div style="position:absolute;left:89.5px;top:24.8px;font-family:'Liberation Sans',sans-serif;font-size:14px;color:#e9ecf4;white-space:nowrap;transform:scaleX(0.89);transform-origin:0 0;line-height:16px">Object</div>
<div style="position:absolute;left:148px;top:24.8px;font-family:'Liberation Sans',sans-serif;font-size:14px;color:#e9ecf4;white-space:nowrap;transform:scaleX(0.89);transform-origin:0 0;line-height:16px">Edit</div>
<div style="position:absolute;left:191px;top:24.8px;font-family:'Liberation Sans',sans-serif;font-size:14px;color:#e9ecf4;white-space:nowrap;transform:scaleX(0.89);transform-origin:0 0;line-height:16px">Paint</div>
<div style="position:absolute;left:240px;top:24.8px;font-family:'Liberation Sans',sans-serif;font-size:14px;color:#e9ecf4;white-space:nowrap;transform:scaleX(0.89);transform-origin:0 0;line-height:16px">View</div>
<div style="position:absolute;left:289px;top:24.8px;font-family:'Liberation Sans',sans-serif;font-size:14px;color:#e9ecf4;white-space:nowrap;transform:scaleX(0.89);transform-origin:0 0;line-height:16px">Help</div>
<div style="position:absolute;left:989px;top:9px;width:7px;height:1px;background:#e8ecf5"></div>
<svg style="position:absolute;left:1013px;top:6px" width="10" height="8"><rect x="1.5" y="2.5" width="5" height="4.5" fill="none" stroke="#e8ecf5" stroke-width="1.1"/><path d="M3,1 H8.5 V5.5" fill="none" stroke="#e8ecf5" stroke-width="1.1"/></svg>
<svg style="position:absolute;left:1039px;top:7px" width="8" height="7"><path d="M0.5,0.5 L7,6.5 M7,0.5 L0.5,6.5" stroke="#e8ecf5" stroke-width="1.1"/></svg>
<svg style="position:absolute;left:910px;top:27px" width="13" height="10"><rect x="0.7" y="2.7" width="11.5" height="6.6" rx="1" fill="none" stroke="#e8ecf5" stroke-width="1.2"/><rect x="0" y="0" width="3" height="4" fill="#27438a"/><path d="M1.5,0.5 V3" stroke="#e8ecf5" stroke-width="1.2"/><path d="M4,8 L6.5,3 L9,8 Z" fill="#e8ecf5"/></svg>
<div style="position:absolute;left:928.5px;top:28.5px;font-family:'Liberation Sans',sans-serif;font-size:7px;font-weight:bold;color:#e8ecf5;white-space:nowrap;transform:scaleX(0.84);transform-origin:0 0;line-height:8px">3D Print</div>
<svg style="position:absolute;left:966px;top:27px" width="12" height="11"><path d="M1,1 H9 L11,3 V10 H1 Z" fill="none" stroke="#e8ecf5" stroke-width="1.2"/><rect x="3" y="1" width="5" height="3" fill="#e8ecf5"/><rect x="3" y="6.5" width="6" height="3" fill="none" stroke="#e8ecf5" stroke-width="1"/></svg>
<div style="position:absolute;left:994px;top:26px;width:1px;height:10px;background:#7f8cb0"></div>
<svg style="position:absolute;left:1010px;top:25px" width="14" height="14"><path d="M3,1.5 V6 H7.5" fill="none" stroke="#e8ecf5" stroke-width="1.2"/><path d="M3.3,5.7 C6,2.5 11,3 11.5,7 C11.8,10 9,11.5 6,12.5" fill="none" stroke="#e8ecf5" stroke-width="1.2"/></svg>
<svg style="position:absolute;left:1035px;top:25px" width="14" height="14"><path d="M11,1.5 V6 H6.5" fill="none" stroke="#6e7ca3" stroke-width="1.2"/><path d="M10.7,5.7 C8,2.5 3,3 2.5,7 C2.2,10 5,11.5 8,12.5" fill="none" stroke="#6e7ca3" stroke-width="1.2"/></svg>
<div style="position:absolute;left:0;top:45px;width:1054px;height:26px;background:#262626"></div>
<div style="position:absolute;left:23.5px;top:54px;font-family:'Liberation Sans',sans-serif;font-size:7px;color:#9a9a9a;white-space:nowrap;transform:scaleX(0.9);transform-origin:0 0;line-height:9px">Simplify</div>
<div style="position:absolute;left:78px;top:54px;font-family:'Liberation Sans',sans-serif;font-size:7px;color:#9a9a9a;white-space:nowrap;transform:scaleX(0.9);transform-origin:0 0;line-height:9px">Split</div>
<div style="position:absolute;left:122px;top:54px;font-family:'Liberation Sans',sans-serif;font-size:7px;color:#9a9a9a;white-space:nowrap;transform:scaleX(0.9);transform-origin:0 0;line-height:9px">Smooth</div>
<div style="position:absolute;left:176px;top:54px;font-family:'Liberation Sans',sans-serif;font-size:7px;color:#9a9a9a;white-space:nowrap;transform:scaleX(0.9);transform-origin:0 0;line-height:9px">Emboss</div>
<div style="position:absolute;left:229.4px;top:54px;font-family:'Liberation Sans',sans-serif;font-size:7px;color:#9a9a9a;white-space:nowrap;transform:scaleX(0.9);transform-origin:0 0;line-height:9px">Extrude down</div>
<div style="position:absolute;left:300px;top:54px;font-family:'Liberation Sans',sans-serif;font-size:7px;color:#9a9a9a;white-space:nowrap;transform:scaleX(0.9);transform-origin:0 0;line-height:9px">Merge</div>
<div style="position:absolute;left:350.5px;top:54px;font-family:'Liberation Sans',sans-serif;font-size:7px;color:#9a9a9a;white-space:nowrap;transform:scaleX(0.9);transform-origin:0 0;line-height:9px">Intersect</div>
<div style="position:absolute;left:406px;top:54px;font-family:'Liberation Sans',sans-serif;font-size:7px;color:#9a9a9a;white-space:nowrap;transform:scaleX(0.9);transform-origin:0 0;line-height:9px">Subtract</div>
<div style="position:absolute;left:461.8px;top:54px;font-family:'Liberation Sans',sans-serif;font-size:7px;color:#9a9a9a;white-space:nowrap;transform:scaleX(0.9);transform-origin:0 0;line-height:9px">Hollow</div>
<svg style="position:absolute;left:0;top:45px" width="470" height="26"><g fill="#9a9a9a" stroke="none"><rect x="7" y="9.9" width="9" height="1.9"/><rect x="7" y="15" width="9" height="2"/><path d="M11.7,12.3 L12.4,15 H11 Z"/><path d="M65.8,8.5 L70,18 H61.7 Z"/><rect x="61" y="13.5" width="10" height="1" fill="#262626"/><rect x="105.3" y="15.5" width="9.2" height="1.6"/><path d="M105.3,11.3 Q107.5,9.3 110.2,11.3 Q112.6,9.3 114.5,11.3" fill="none" stroke="#9a9a9a" stroke-width="1.4"/><path d="M109.6,11.5 H110.8 L110.6,15.5 H109.8 Z"/></g><path d="M164,8 L165.7,11.6 L169.6,12 L166.7,14.6 L167.5,18.4 L164,16.5 L160.5,18.4 L161.3,14.6 L158.4,12 L162.3,11.6 Z" fill="none" stroke="#9a9a9a" stroke-width="1.1"/><rect x="212.2" y="8.7" width="10" height="9.6" rx="1.8" fill="none" stroke="#9a9a9a" stroke-width="1.3"/><rect x="212.5" y="13" width="9.5" height="5" rx="1" fill="#9a9a9a"/><rect x="283.5" y="9" width="6" height="6" fill="#9a9a9a"/><rect x="287" y="12" width="6.5" height="6.5" fill="#9a9a9a" stroke="#262626" stroke-width="0.8"/><rect x="333.5" y="9" width="9" height="9" fill="none" stroke="#9a9a9a" stroke-width="1" stroke-dasharray="1.5,1"/><rect x="336" y="11.5" width="4.5" height="4.5" fill="#9a9a9a"/><rect x="392" y="11.5" width="7" height="7" fill="none" stroke="#9a9a9a" stroke-width="1" stroke-dasharray="1.5,1"/><path d="M390,17 V9.5 H397" fill="none" stroke="#9a9a9a" stroke-width="1.5"/><rect x="444.8" y="8.5" width="10" height="10" rx="1.5" fill="none" stroke="#9a9a9a" stroke-width="2"/></svg>
<div style="position:absolute;left:974px;top:71px;width:1px;height:522px;background:#1f1f1f"></div>
<svg style="position:absolute;left:983px;top:79px" width="8" height="9"><path d="M1,1 L4.8,4.5 L1,8" fill="none" stroke="#e0e0e0" stroke-width="1.2"/></svg>
<div style="position:absolute;left:998px;top:105.1px;font-family:'Liberation Sans',sans-serif;font-size:7px;font-weight:bold;color:#7a7a7a;white-space:nowrap;transform:scaleX(0.88);transform-origin:0 0;line-height:9px">Group</div>
<div style="position:absolute;left:998px;top:131.5px;font-family:'Liberation Sans',sans-serif;font-size:7px;font-weight:bold;color:#7a7a7a;white-space:nowrap;transform:scaleX(0.88);transform-origin:0 0;line-height:9px">Ungroup</div>
<div style="position:absolute;left:998px;top:157.7px;font-family:'Liberation Sans',sans-serif;font-size:7px;font-weight:bold;color:#f2f2f2;white-space:nowrap;transform:scaleX(0.88);transform-origin:0 0;line-height:9px">Select all</div>
<div style="position:absolute;left:998px;top:184.2px;font-family:'Liberation Sans',sans-serif;font-size:7px;font-weight:bold;color:#7a7a7a;white-space:nowrap;transform:scaleX(0.88);transform-origin:0 0;line-height:9px">Deselect all</div>
<div style="position:absolute;left:998px;top:210.3px;font-family:'Liberation Sans',sans-serif;font-size:7px;font-weight:bold;color:#f2f2f2;white-space:nowrap;transform:scaleX(0.88);transform-origin:0 0;line-height:9px">Invert selection</div>
<div style="position:absolute;left:998px;top:237.3px;font-family:'Liberation Sans',sans-serif;font-size:7px;font-weight:bold;color:#f2f2f2;white-space:nowrap;transform:scaleX(0.88);transform-origin:0 0;line-height:9px">Sticky selection</div>
<svg style="position:absolute;left:975px;top:95px" width="30" height="160"><rect x="6.5" y="10.099999999999994" width="9" height="9" fill="none" stroke="#777" stroke-width="1" stroke-dasharray="1,1"/><path d="M9,17.599999999999994 L11.5,13.599999999999994 L14,17.599999999999994 Z" fill="#777"/><rect x="6.5" y="36.5" width="9" height="9" fill="none" stroke="#777" stroke-width="1" stroke-dasharray="1,1"/><path d="M9,44 L11.5,40 L14,44 Z" fill="#777"/><circle cx="11" cy="67.19999999999999" r="4.6" fill="none" stroke="#f0f0f0" stroke-width="1"/><circle cx="11" cy="119.80000000000001" r="4.6" fill="none" stroke="#f0f0f0" stroke-width="1"/><circle cx="11" cy="146.8" r="4.6" fill="none" stroke="#f0f0f0" stroke-width="1"/><circle cx="11" cy="93.69999999999999" r="4.6" fill="none" stroke="#6a6a6a" stroke-width="1"/><path d="M9,68.69999999999999 L12.5,65.19999999999999 M9.5,66.19999999999999 h2.5 v2.5" fill="none" stroke="#f0f0f0" stroke-width="1.3"/><path d="M9,121.80000000000001 L13,117.80000000000001" stroke="#f0f0f0" stroke-width="2"/><path d="M11,144.3 L13.3,148.8 H8.7 Z" fill="none" stroke="#f0f0f0" stroke-width="1"/></svg>
<div style="position:absolute;left:975px;top:254px;width:79px;height:1px;background:#4a4a4a"></div>
<div style="position:absolute;left:978.5px;top:260px;font-family:'Liberation Sans',sans-serif;font-size:7px;font-weight:bold;color:#e8e8e8;white-space:nowrap;transform:scaleX(0.88);transform-origin:0 0;line-height:9px">Items</div>
<svg style="position:absolute;left:1039px;top:261px" width="8" height="6"><path d="M1,5 L4,2 L7,5" fill="none" stroke="#e0e0e0" stroke-width="1.1"/></svg>
<div style="position:absolute;left:977.5px;top:280.0px;width:32.6px;height:32.6px;background:#ffffff;box-shadow:0 0 1px 1px #111"></div>
<div style="position:absolute;left:1017.1px;top:280.0px;width:32.6px;height:32.6px;background:#ffffff;box-shadow:0 0 1px 1px #111"></div>
<div style="position:absolute;left:977.5px;top:319.5px;width:32.6px;height:32.6px;background:#ffffff;box-shadow:0 0 1px 1px #111"></div>
<div style="position:absolute;left:1017.1px;top:319.5px;width:32.6px;height:32.6px;background:#ffffff;box-shadow:0 0 1px 1px #111"></div>
<svg style="position:absolute;left:975px;top:275px" width="79" height="80"><g fill="none" stroke="#c8c8c8" stroke-width="0.7" stroke-dasharray="1,1"><path d="M13.5,36 L14.5,16 H22 L24,36"/><path d="M16,20 V34 M21,20 V34"/></g><path d="M45,18 L51,15 H71 L72,19 L71,28 H46 Z" fill="#d2d2d2"/><path d="M48,16 L54,20 H60 L62,16 Z M62,16 L66,20 H70 L70,16 Z" fill="#bbbbbb"/><rect x="46" y="20" width="25" height="8" fill="#dadada"/><rect x="5.5" y="65" width="27.5" height="0.9" fill="#bdbdbd"/><path d="M45,62 L71,62 L72,66 L45,66 Z" fill="#c4c4c4"/><path d="M55,62 L56,58 L62,56 L64,62 Z" fill="#aaaaaa"/><circle cx="47" cy="62" r="1.5" fill="#b0b0b0"/></svg>
<div style="position:absolute;left:874.2px;top:514.2px;width:163.5px;height:65.8px;box-sizing:border-box;border:6.4px solid #ff8a00;border-radius:12px;background:#000;box-shadow:0 0 0 1px #1a2428"></div>
<div style="position:absolute;left:897.5px;top:523.3px;font-family:'Liberation Sans',sans-serif;font-weight:bold;font-size:39.5px;line-height:44px;color:#fff;white-space:nowrap;transform:scaleX(0.6925);transform-origin:0 0">3D Model</div>
</body></html>
